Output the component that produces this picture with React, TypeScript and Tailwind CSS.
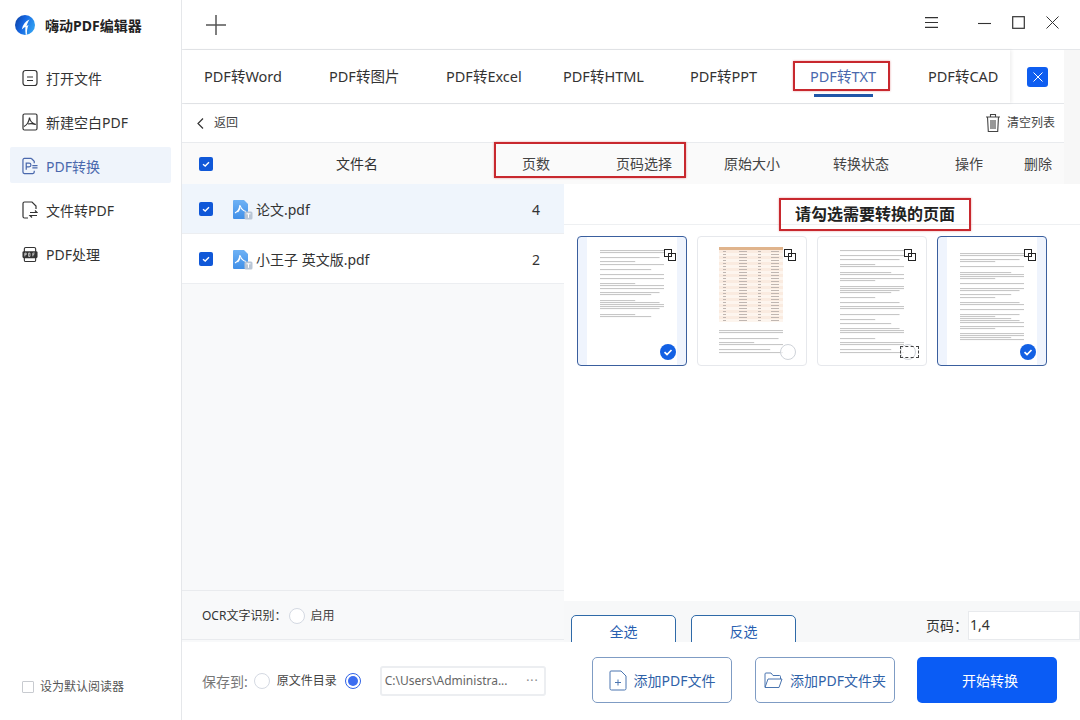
import React from "react";

const FONT = '"Noto Sans", "Noto Sans CJK SC", sans-serif';

function Check({ className = "" }: { className?: string }) {
  return (
    <span className={`flex h-[14px] w-[14px] shrink-0 items-center justify-center rounded-[2px] bg-[#1058d8] ${className}`}>
      <svg width="10" height="10" viewBox="0 0 10 10" fill="none">
        <path d="M2 5.2 4.2 7 8 3.2" stroke="#fff" strokeWidth="1.4" />
      </svg>
    </span>
  );
}

function FileIcon() {
  return (
    <svg width="21" height="21" viewBox="0 0 21 21" className="shrink-0">
      <defs>
        <linearGradient id="fg" x1="0" y1="0" x2="0" y2="1">
          <stop offset="0" stopColor="#6fb2f5" />
          <stop offset="1" stopColor="#3f8fe8" />
        </linearGradient>
      </defs>
      <path d="M2 1h10l4 4v14a1 1 0 0 1-1 1H2a1 1 0 0 1-1-1V2a1 1 0 0 1 1-1z" fill="url(#fg)" />
      <path d="M3 14C6 12.500 7.500 9.500 8 6c.7 3.500 2.500 5.500 6 6.500M8 9c-.6 1.500-1.500 3-2.500 4" stroke="#fff" strokeWidth="1.200" fill="none" />
      <rect x="12.500" y="12.500" width="8" height="8" rx="1.500" fill="#b9c6d6" />
      <path d="M14.500 14.800h4M16.500 14.800v4" stroke="#fff" strokeWidth="1" />
    </svg>
  );
}

function Radio({ on = false }: { on?: boolean }) {
  return on ? (
    <span className="flex h-[16px] w-[16px] shrink-0 items-center justify-center rounded-full border border-[#2f62e6] bg-white">
      <span className="block h-[10px] w-[10px] rounded-full bg-[#3b6cf0]" />
    </span>
  ) : (
    <span className="block h-[16px] w-[16px] shrink-0 rounded-full border border-[#d4d9e2] bg-white" />
  );
}

const navIcons: Record<string, React.ReactNode> = {
  open: (
    <svg width="16" height="18" viewBox="0 0 16 18" fill="none" stroke="#333" strokeWidth="1.200">
      <rect x="1" y="1.500" width="14" height="15" rx="2.500" />
      <path d="M5 8h6M5 11.500h6" />
    </svg>
  ),
  blank: (
    <svg width="16" height="18" viewBox="0 0 16 18" fill="none" stroke="#333" strokeWidth="1.200">
      <rect x="1" y="1" width="14" height="16" rx="1.500" />
      <path d="M2 13.500C5 12 7 8.500 7.500 4.500c.5 3.500 2.500 6 6.500 7M6 11c2.500-.5 5-.5 7 .5" />
    </svg>
  ),
  convert: (
    <svg width="17" height="18" viewBox="0 0 17 18" fill="none" stroke="#4a68ad" strokeWidth="1.300">
      <path d="M10 1H2.500A1.500 1.500 0 0 0 1 2.500v13A1.500 1.500 0 0 0 2.500 17h9a1.500 1.500 0 0 0 1.500-1.500V14M10 1l3 3v2" />
      <path d="M4.500 13V6h3a2 2 0 0 1 0 4h-3" />
      <path d="M11 8.500h5.500M11 11h5.500" />
    </svg>
  ),
  topdf: (
    <svg width="16" height="18" viewBox="0 0 16 18" fill="none" stroke="#333" strokeWidth="1.200">
      <path d="M6 17H2.500A1.500 1.500 0 0 1 1 15.500v-13A1.500 1.500 0 0 1 2.500 1H10l4 4v3" />
      <path d="M8 11.500h7l-2-2M15 14.500H8l2 2" />
    </svg>
  ),
  process: (
    <svg width="17" height="17" viewBox="0 0 17 17" fill="none">
      <rect x="2.500" y="1" width="12" height="15" rx="1.500" stroke="#333" strokeWidth="1.200" />
      <rect x="0.500" y="5" width="16" height="7.500" rx="1.500" fill="#333" />
      <path d="M3 7v3.500M3 7h1.500v1.700H3M7 7v3.500h1.500V7H7M11.500 7v3.500M11.500 7h2M11.500 8.700h1.500" stroke="#fff" strokeWidth="0.700" />
    </svg>
  ),
};

function NavItem({ icon, label, active = false }: { icon: string; label: string; active?: boolean }) {
  return (
    <div className={`flex h-[36px] items-center gap-[8px] rounded-[2px] pl-[12px] pt-[2px] text-[14px] ${active ? "bg-[#eff4fb] text-[#4a68ad]" : "text-[#333]"}`}>
      <span className="flex w-[16px] justify-center">{navIcons[icon]}</span>
      <span>{label}</span>
    </div>
  );
}

const tabs = [
  { t: "PDF转Word", c: "w-[125px]" },
  { t: "PDF转图片", c: "w-[117px]" },
  { t: "PDF转Excel", c: "w-[117px]" },
  { t: "PDF转HTML", c: "w-[127px]" },
  { t: "PDF转PPT", c: "w-[120px]" },
  { t: "PDF转TXT", c: "w-[118px]" },
  { t: "PDF转CAD", c: "w-[70px]" },
];

const heads = [
  { t: "页数", c: "w-[28px] ml-[144px]" },
  { t: "页码选择", c: "w-[56px] ml-[66px]" },
  { t: "原始大小", c: "w-[56px] ml-[52px]" },
  { t: "转换状态", c: "w-[56px] ml-[53px]" },
  { t: "操作", c: "w-[28px] ml-[66px]" },
  { t: "删除", c: "w-[28px] ml-[41px]" },
];

function Lines({ ys, left = 23, full = 64 }: { ys: number[]; left?: number; full?: number }) {
  return (
    <g fill="#a2a2a2" opacity="0.6" filter="url(#soft)">
      {ys.map((y, i) => {
        const w = i % 5 === 3 ? full * 0.55 : i % 7 === 5 ? full * 0.8 : i % 3 === 2 ? full * 0.93 : full;
        return <rect key={i} x={left} y={y} width={w} height="1.100" />;
      })}
    </g>
  );
}

const t1 = [13, 15, 20, 24, 27, 32, 37, 41, 46, 48, 51, 55, 57, 63, 65, 67, 69, 71, 77, 79];
const t3 = [13, 18, 22, 27, 29, 35, 37, 41, 43, 49, 51, 53, 55, 60, 65, 69, 71, 77, 82, 86, 91, 93, 95, 101, 105, 107, 112, 115];
const t4 = [16, 18, 22, 24, 29, 35, 37, 39, 41, 46, 51, 53, 57, 60, 65, 67, 72, 77, 79, 81, 83, 85, 89, 91, 96, 98, 100, 102];
const t2 = [93, 95, 101, 105, 107, 112, 115];

function PageArt({ kind }: { kind: number }) {
  return (
    <svg width="108" height="128" viewBox="0 0 108 128" className="block">
      <defs>
        <filter id="soft" x="-5%" y="-5%" width="110%" height="110%">
          <feGaussianBlur stdDeviation="0.45" />
        </filter>
      </defs>
      {kind === 1 && <Lines ys={t1} left={22} />}
      {kind === 3 && <Lines ys={t3} left={22} />}
      {kind === 4 && <Lines ys={t4} left={22} />}
      {kind === 2 && (
        <g>
          <rect x="21" y="10" width="64" height="3" fill="#e0b48c" />
          {Array.from({ length: 24 }).map((_, i) => (
            <g key={i}>
              <rect x="21" y={13 + i * 3} width="64" height="3" fill={i % 2 ? "#fdf5ee" : "#faebe0"} />
              <rect x="25" y={14 + i * 3} width="3" height="1" fill="#c0b6b1" />
              <rect x="41" y={14 + i * 3} width="8" height="1" fill="#c0b6b1" />
              <rect x="60" y={14 + i * 3} width="3" height="1" fill="#c0b6b1" />
              <rect x="73" y={14 + i * 3} width="8" height="1" fill="#c0b6b1" />
            </g>
          ))}
          <Lines ys={t2} left={21} />
        </g>
      )}
    </svg>
  );
}

function Thumb({ kind, selected = false }: { kind: number; selected?: boolean }) {
  return (
    <div className={`relative h-[130px] w-[110px] overflow-hidden rounded-[4px] border ${selected ? "border-[#3a5f9e] bg-[#eff4fd]" : "border-[#e6e8ec] bg-white"}`}>
      <div className={`mx-auto h-full ${selected ? "w-[90px] bg-white" : "w-full"}`} />
      <div className="absolute left-0 top-0">
        <PageArt kind={kind} />
      </div>
      <svg width="12" height="12" viewBox="0 0 12 12" fill="none" stroke="#222" strokeWidth="1" className="absolute left-[86px] top-[12px]">
        <rect x="0.500" y="0.500" width="7" height="7" />
        <rect x="4.500" y="4.500" width="7" height="7" />
      </svg>
      {selected ? (
        <span className="absolute left-[82px] top-[107px] flex h-[16px] w-[16px] items-center justify-center rounded-full bg-[#1260e4]">
          <svg width="10" height="10" viewBox="0 0 10 10" fill="none">
            <path d="M1.500 5.200 4 7.500 8.500 3" stroke="#fff" strokeWidth="1.700" />
          </svg>
        </span>
      ) : (
        <span className="absolute left-[82px] top-[107px] h-[16px] w-[16px] rounded-full border border-[#cfd3d9] bg-white/70" />
      )}
      {kind === 3 && <span className="absolute left-[82px] top-[109px] h-[12px] w-[19px] border border-dashed border-[#444]" />}
    </div>
  );
}

function FileRow({ name, pages, active = false }: { name: string; pages: string; active?: boolean }) {
  return (
    <div className={`flex h-[50px] items-center border-b border-[#eceef1] pl-[17px] pt-[1px] text-[#333] ${active ? "bg-[#eff5fc]" : "bg-white"}`}>
      <Check />
      <span className="ml-[19px] mr-[3px]">
        <FileIcon />
      </span>
      <span className="w-[272px] text-[14px]">{name}</span>
      <span className="w-[16px] text-center text-[14px]">{pages}</span>
    </div>
  );
}

const redBox = "absolute border-2 border-[#c8282e] shadow-[0_0_2px_rgba(200,40,46,0.45)]";

export default function App() {
  return (
    <div className="flex h-[720px] w-[1080px] overflow-hidden bg-white text-[#333]" style={{ fontFamily: FONT }}>
      <aside className="flex w-[182px] shrink-0 flex-col border-r border-[#e5e7ea] bg-white">
        <div className="flex h-[50px] items-center gap-[10px] pl-[15px]">
          <svg width="20" height="20" viewBox="0 0 20 20">
            <defs>
              <linearGradient id="lg" x1="0" y1="0" x2="1" y2="0.4">
                <stop offset="0" stopColor="#0d3f9e" />
                <stop offset="0.5" stopColor="#1667e2" />
                <stop offset="1" stopColor="#2f9bf0" />
              </linearGradient>
            </defs>
            <circle cx="10" cy="10" r="10" fill="url(#lg)" />
            <path d="M14.500 4.500C10.500 6 7.800 9.500 6.800 14.500c1.100-1.100 2.200-2 3.600-2.700-.2 2.800-.1 5.400.3 8 .5-.1 1-.2 1.300-.3-.3-2.800.2-6.500 1.500-9.500-.6.300-1.300.6-2 1.100.6-2.300 1.700-4.600 3-6.600z" fill="#fff" />
          </svg>
          <span className="text-[14px] font-bold text-[#222]">嗨动PDF编辑器</span>
        </div>
        <nav className="mt-[9px] flex flex-col gap-[8px] px-[10px]">
          <NavItem icon="open" label="打开文件" />
          <NavItem icon="blank" label="新建空白PDF" />
          <NavItem icon="convert" label="PDF转换" active />
          <NavItem icon="topdf" label="文件转PDF" />
          <NavItem icon="process" label="PDF处理" />
        </nav>
        <div className="mb-[24px] mt-auto flex items-center gap-[6px] pl-[22px] text-[12px] text-[#555]">
          <span className="h-[12px] w-[12px] rounded-[1px] border border-[#c8cbd0]" />
          <span>设为默认阅读器</span>
        </div>
      </aside>

      <main className="flex min-w-0 flex-1 flex-col">
        <header className="flex h-[50px] shrink-0 items-center border-b border-[#e5e7ea] pl-[23px]">
          <svg width="22" height="22" viewBox="0 0 22 22" stroke="#555" strokeWidth="1.500">
            <path d="M11 1v20M1 11h20" />
          </svg>
          <div className="mb-[4px] ml-auto flex items-center">
            <svg width="15" height="11" viewBox="0 0 15 11" stroke="#333" strokeWidth="1.100" className="mr-[39px]">
              <path d="M1 .6h13M1 5.500h13M1 10.400h13" />
            </svg>
            <svg width="13" height="13" viewBox="0 0 13 13" stroke="#333" strokeWidth="1.100" className="mr-[21px]">
              <path d="M0 7.500h13" />
            </svg>
            <svg width="13" height="13" viewBox="0 0 13 13" fill="none" stroke="#333" strokeWidth="1.200" className="mr-[21px]">
              <rect x="0.700" y="0.700" width="11.600" height="11.600" />
            </svg>
            <svg width="13" height="13" viewBox="0 0 13 13" stroke="#333" strokeWidth="1" className="mr-[21px]">
              <path d="M.5.500l12 12M12.500.500l-12 12" />
            </svg>
          </div>
        </header>

        <div className="flex shrink-0">
          <div className="flex w-[882px] flex-col">
            <div className="relative flex h-[54px] border-b border-[#e5e7ea]">
              <div className="flex w-[828px] items-center pl-[22px] text-[14.5px] shadow-[2px_0_3px_rgba(0,0,0,0.06)]">
                {tabs.map((t) => (
                  <span key={t.t} className={`relative shrink-0 whitespace-nowrap ${t.c} ${t.t === "PDF转TXT" ? "text-[#4a68ad]" : "text-[#333]"}`}>
                    {t.t}
                    {t.t === "PDF转TXT" && <span className="absolute -bottom-[10px] left-[4px] h-[3px] w-[59px] bg-[#2056a8]" />}
                  </span>
                ))}
              </div>
              <div className="flex flex-1 items-center pl-[17px]">
                <span className="flex h-[20px] w-[21px] items-center justify-center rounded-[3px] bg-[#0f5ef0]">
                  <svg width="10" height="10" viewBox="0 0 10 10" stroke="#fff" strokeWidth="1">
                    <path d="M.5.500l9 9M9.500.500l-9 9" />
                  </svg>
                </span>
              </div>
              <span className={`${redBox} left-[611px] top-[11px] h-[30px] w-[97px]`} />
            </div>
            <div className="flex h-[39px] items-center border-b border-[#e9ebee] pl-[15px] text-[12px] text-[#444]">
              <svg width="7" height="11" viewBox="0 0 7 11" fill="none" stroke="#333" strokeWidth="1.200">
                <path d="M6 .5 1 5.500l5 5" />
              </svg>
              <span className="ml-[10px]">返回</span>
              <svg width="16" height="20" viewBox="0 0 16 20" fill="none" stroke="#444" strokeWidth="1.100" className="ml-auto">
                <path d="M1 4h14M5.500 4V1.500h5V4M2.500 4l.8 14.500h9.400L13.500 4M6 7v9M8 7v9M10 7v9" />
              </svg>
              <span className="ml-[6px] mr-[9px]">清空列表</span>
            </div>
            <div className="relative flex h-[41px] items-center bg-[#fafafa] pl-[17px] text-[14px] text-[#444]">
              <Check />
              <span className="ml-[123px] w-[42px] text-center text-[#333]">文件名</span>
              {heads.map((h) => (
                <span key={h.t} className={`${h.c} whitespace-nowrap text-center`}>{h.t}</span>
              ))}
              <span className={`${redBox} left-[312px] top-[-1px] h-[36px] w-[192px]`} />
            </div>
          </div>
          <div className="flex-1 bg-[#f7f7f7]" />
        </div>

        <div className="flex h-[458px] shrink-0">
          <section className="flex w-[382px] flex-col bg-[#f8f9fa]">
            <FileRow name="论文.pdf" pages="4" active />
            <FileRow name="小王子 英文版.pdf" pages="2" />
            <div className="mb-[2px] mt-auto flex h-[50px] items-center border-y border-[#e9ebee] pl-[20px] pt-[2px] text-[12px]">
              <span>OCR文字识别：</span>
              <span className="ml-[3px]"><Radio /></span>
              <span className="ml-[5px] text-[#444]">启用</span>
            </div>
          </section>
          <section className="relative flex min-w-0 flex-1 flex-col bg-white">
            <div className="flex h-[41px] shrink-0 items-center border-b border-[#eef0f2] pl-[231px] pt-[19px] text-[16px] font-bold leading-none text-[#222]">
              <span className="whitespace-nowrap">请勾选需要转换的页面</span>
            </div>
            <div className="flex gap-[10px] pl-[13px] pt-[11px]">
              <Thumb kind={1} selected />
              <Thumb kind={2} />
              <Thumb kind={3} />
              <Thumb kind={4} selected />
            </div>
            <div className="mt-auto flex h-[41px] items-start overflow-hidden bg-[#f7f8f9] pl-[7px] text-[14px]">
              <span className="mt-[14px] flex h-[40px] w-[105px] justify-center rounded-[5px] border border-[#2f6aa8] bg-white pt-[5px] text-[#2860b0]">全选</span>
              <span className="ml-[15px] mt-[14px] flex h-[40px] w-[105px] justify-center rounded-[5px] border border-[#2f6aa8] bg-white pt-[5px] text-[#2860b0]">反选</span>
              <span className="ml-[130px] mt-[14px] whitespace-nowrap text-[14px] text-[#333]">页码：</span>
              <span className="mt-[10px] h-[29px] flex-1 border border-[#e8eaed] bg-white pl-[1px] pt-[2px] text-[14px] text-[#333]">1,4</span>
            </div>
            <span className={`${redBox} left-[215px] top-[14px] h-[33px] w-[192px]`} />
          </section>
        </div>

        <footer className="flex min-h-0 flex-1 bg-white">
          <div className="flex w-[382px] shrink-0 items-center pl-[20px] text-[12px]">
            <span className="text-[14px] text-[#777]">保存到:</span>
            <span className="ml-[6px]"><Radio /></span>
            <span className="ml-[7px] text-[#444]">原文件目录</span>
            <span className="ml-[8px]"><Radio on /></span>
            <div className="ml-[19px] flex h-[30px] w-[166px] items-center rounded-[3px] border-2 border-[#eceef1] pl-[3px] text-[#666]">
              <span className="whitespace-nowrap">C:\Users\Administra...</span>
              <span className="ml-auto mr-[5px] tracking-[1px] text-[#888]">···</span>
            </div>
          </div>
          <div className="flex items-start pl-[28px] pt-[15px] text-[14px]">
            <button className="flex h-[46px] w-[140px] items-center justify-center gap-[7px] rounded-[5px] border border-[#7f9cc4] bg-white text-[#2f62a8]">
              <svg width="18" height="21" viewBox="0 0 18 21" fill="none" stroke="#4a75b0" strokeWidth="1">
                <path d="M2 1h10l5 5v12.500a1.500 1.500 0 0 1-1.500 1.500h-13A1.500 1.500 0 0 1 1 18.500V2a1 1 0 0 1 1-1zM6 12.500h6M9 9.500v6" />
              </svg>
              添加PDF文件
            </button>
            <button className="ml-[23px] flex h-[46px] w-[140px] items-center justify-center gap-[7px] rounded-[5px] border border-[#7f9cc4] bg-white whitespace-nowrap text-[#2f62a8]">
              <svg width="19" height="17" viewBox="0 0 19 17" fill="none" stroke="#4a75b0" strokeWidth="1">
                <path d="M1 15V2a1 1 0 0 1 1-1h5l2 2.500h6.500a1 1 0 0 1 1 1V7M1 15.500h14l3-8.500H4z" />
              </svg>
              添加PDF文件夹
            </button>
            <button className="ml-[22px] h-[46px] w-[140px] rounded-[5px] bg-[#0a5cf5] pl-[6px] text-white">开始转换</button>
          </div>
        </footer>
      </main>
    </div>
  );
}
